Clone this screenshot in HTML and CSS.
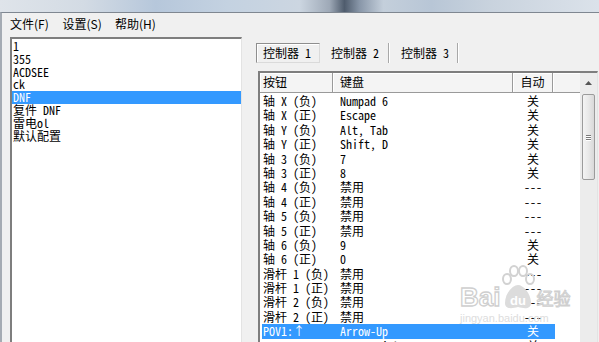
FILE: index.html
```html
<!DOCTYPE html>
<html>
<head>
<meta charset="utf-8">
<title>Controller</title>
<link rel="stylesheet" href="styles.css">
</head>
<body>
<div class="window">
  <div class="titlebar"></div>
  <div class="frame">
    <div class="menubar">
      <span class="menu">文件(F)</span>
      <span class="menu">设置(S)</span>
      <span class="menu">帮助(H)</span>
    </div>
    <div class="content">
      <div class="profiles">
        <div class="item">1</div>
        <div class="item">355</div>
        <div class="item">ACDSEE</div>
        <div class="item">ck</div>
        <div class="item sel">DNF</div>
        <div class="item">复件 DNF</div>
        <div class="item">雷电ol</div>
        <div class="item">默认配置</div>
      </div>
      <div class="right">
        <div class="tabs">
          <div class="tab tab1">控制器 1</div>
          <div class="tab tab2">控制器 2</div>
          <div class="tab tab3">控制器 3</div>
        </div>
        <div class="listview">
          <div class="lv-main">
            <div class="lv-header">
              <div class="hc h1">按钮</div>
              <div class="hc h2">键盘</div>
              <div class="hc h3">自动</div>
              <div class="hc h4"></div>
            </div>
            <div class="lv-rows">
              <div class="row"><span class="c1">轴 X (负)</span><span class="c2">Numpad 6</span><span class="c3">关</span></div>
              <div class="row"><span class="c1">轴 X (正)</span><span class="c2">Escape</span><span class="c3">关</span></div>
              <div class="row"><span class="c1">轴 Y (负)</span><span class="c2">Alt, Tab</span><span class="c3">关</span></div>
              <div class="row"><span class="c1">轴 Y (正)</span><span class="c2">Shift, D</span><span class="c3">关</span></div>
              <div class="row"><span class="c1">轴 3 (负)</span><span class="c2">7</span><span class="c3">关</span></div>
              <div class="row"><span class="c1">轴 3 (正)</span><span class="c2">8</span><span class="c3">关</span></div>
              <div class="row"><span class="c1">轴 4 (负)</span><span class="c2">禁用</span><span class="c3">---</span></div>
              <div class="row"><span class="c1">轴 4 (正)</span><span class="c2">禁用</span><span class="c3">---</span></div>
              <div class="row"><span class="c1">轴 5 (负)</span><span class="c2">禁用</span><span class="c3">---</span></div>
              <div class="row"><span class="c1">轴 5 (正)</span><span class="c2">禁用</span><span class="c3">---</span></div>
              <div class="row"><span class="c1">轴 6 (负)</span><span class="c2">9</span><span class="c3">关</span></div>
              <div class="row"><span class="c1">轴 6 (正)</span><span class="c2">0</span><span class="c3">关</span></div>
              <div class="row"><span class="c1">滑杆 1 (负)</span><span class="c2">禁用</span><span class="c3">---</span></div>
              <div class="row"><span class="c1">滑杆 1 (正)</span><span class="c2">禁用</span><span class="c3">---</span></div>
              <div class="row"><span class="c1">滑杆 2 (负)</span><span class="c2">禁用</span><span class="c3">---</span></div>
              <div class="row"><span class="c1">滑杆 2 (正)</span><span class="c2">禁用</span><span class="c3">---</span></div>
              <div class="row sel"><span class="c1">POV1:↑</span><span class="c2">Arrow-Up</span><span class="c3">关</span></div>
              <div class="row"><span class="c1">POV1:→</span><span class="c2">Arrow-Right</span><span class="c3">关</span></div>
            </div>
          </div>
          <div class="scrollbar">
            <div class="sb-up">
              <svg width="7" height="4" viewBox="0 0 7 4"><path d="M0 4 L3.5 0 L7 4 Z" fill="#555"/></svg>
            </div>
            <div class="sb-thumb">
              <div class="grip"></div>
              <div class="grip"></div>
              <div class="grip"></div>
            </div>
          </div>
        </div>
      </div>
    </div>
  </div>
  <div class="watermark">
    <div class="wm-top">
      <span class="wm-bai">Bai</span>
      <svg class="wm-paw" width="34" height="46" viewBox="0 0 34 46">
        <ellipse cx="6" cy="14" rx="4" ry="5" fill="none" stroke="#d2d2d2" stroke-width="2"/>
        <ellipse cx="13" cy="6" rx="4" ry="5" fill="none" stroke="#d2d2d2" stroke-width="2"/>
        <ellipse cx="22" cy="6" rx="4" ry="5" fill="none" stroke="#d2d2d2" stroke-width="2"/>
        <ellipse cx="29" cy="14" rx="4" ry="5" fill="none" stroke="#d2d2d2" stroke-width="2"/>
        <path d="M4 38 C4 28 12 20 17 20 C22 20 30 28 30 38 C30 44 24 44 17 42 C10 44 4 44 4 38 Z" fill="#dcdcdc"/>
        <text x="17" y="40" font-family="Liberation Sans, sans-serif" font-size="13" font-weight="bold" fill="#fff" text-anchor="middle">du</text>
      </svg>
      <span class="wm-jy">经验</span>
    </div>
    <div class="wm-url">jingyan.baidu.com</div>
  </div>
</div>
</body>
</html>
```

FILE: styles.css
```css
html, body {
  margin: 0;
  padding: 0;
}
body {
  width: 599px;
  height: 342px;
  overflow: hidden;
  background: #f0f0f0;
  font-family: "Noto Sans Mono CJK SC", "Liberation Mono", "Noto Sans CJK SC", monospace;
  font-size: 12px;
  color: #000;
}
.window {
  position: relative;
  display: flex;
  flex-direction: column;
  height: 342px;
}
.titlebar {
  height: 12px;
  flex: none;
  background: linear-gradient(90deg, #dfe4ea 0%, #d3dbe4 14%, #b6c7db 26%, #c4d2e1 38%, #ccd6e1 50%, #9ea9b7 55%, #4f5c6d 57.5%, #8896a8 60%, #c4cfdb 64%, #b8c6d6 72%, #c9d3de 82%, #dbe2ea 100%);
}
.frame {
  flex: 1;
  min-height: 0;
  display: flex;
  flex-direction: column;
  border-top: 1px solid #7f8791;
  border-left: 2px solid #a5abb3;
}
.menubar {
  height: 23px;
  flex: none;
  display: flex;
  padding-left: 8px;
  font-family: "Noto Sans CJK SC", "Liberation Sans", sans-serif;
  font-size: 12px;
  line-height: 22px;
}
.menu {
  width: 52.5px;
  white-space: nowrap;
}
.content {
  flex: 1;
  min-height: 0;
  display: flex;
}
.profiles {
  flex: none;
  width: 232px;
  box-sizing: border-box;
  margin: 1px 0 0 8px;
  border-style: solid;
  border-width: 2px 1px 0 2px;
  border-color: #7e7e7e #e3e3e3 #e3e3e3 #7e7e7e;
  background: #fff;
  padding-top: 1px;
}
.item {
  height: 12.8px;
  line-height: 12.8px;
  padding-left: 1px;
  white-space: nowrap;
}
.item.sel {
  background: #3399ff;
  color: #fff;
}
.right {
  flex: 1;
  min-width: 0;
  display: flex;
  flex-direction: column;
  padding: 7px 1px 0 14px;
}
.tabs {
  display: flex;
  height: 20px;
  flex: none;
}
.tab {
  height: 20px;
  box-sizing: border-box;
  line-height: 18px;
  white-space: nowrap;
}
.tab1 {
  width: 64px;
  padding-left: 6px;
  border: 1px solid;
  border-color: #8e8e8e #dadada #dadada #8e8e8e;
  box-shadow: inset 1px 1px #ffffff;
}
.tab2 {
  width: 69px;
  padding-left: 11px;
  padding-top: 1px;
  border-right: 1px solid #a8a8a8;
  box-shadow: 1px 0 #ffffff;
}
.tab3 {
  width: 69px;
  padding-left: 12px;
  padding-top: 1px;
  border-right: 1px solid #a8a8a8;
  box-shadow: 1px 0 #ffffff;
}
.listview {
  flex: 1;
  min-height: 0;
  display: flex;
  margin: 8px 0 0 2px;
  border-style: solid;
  border-width: 2px 1px 0 2px;
  border-color: #7e7e7e #e3e3e3 #e3e3e3 #7e7e7e;
  background: #fff;
}
.lv-main {
  flex: 1;
  min-width: 0;
}
.lv-header {
  display: flex;
  height: 20px;
  box-sizing: border-box;
  border-bottom: 1px solid #9a9a9a;
  background: #f4f4f4;
}
.hc {
  box-sizing: border-box;
  height: 19px;
  line-height: 18px;
  white-space: nowrap;
  border-right: 1px solid #9a9a9a;
  box-shadow: inset 1px 1px #ffffff;
}
.h1 { width: 73px; padding-left: 3px; }
.h2 { width: 180px; padding-left: 7px; }
.h3 { width: 40px; text-align: center; }
.h4 { flex: 1; border-right: none; }
.lv-rows {
  padding-top: 1px;
}
.row {
  display: flex;
  width: 293px;
  height: 14.4px;
  line-height: 14.4px;
  margin-left: 2px;
  white-space: nowrap;
}
.row.sel {
  background: #3399ff;
  color: #fff;
}
.c1 { width: 71px; padding-left: 1px; box-sizing: border-box; }
.c2 { width: 180px; padding-left: 7px; box-sizing: border-box; }
.c3 { width: 40px; text-align: center; }
.scrollbar {
  flex: none;
  width: 17px;
  background: #ececec;
  display: flex;
  flex-direction: column;
  align-items: center;
}
.sb-up {
  width: 17px;
  height: 19px;
  display: flex;
  align-items: center;
  justify-content: center;
}
.sb-thumb {
  margin-top: 2px;
  width: 13px;
  height: 86px;
  box-sizing: border-box;
  border: 1px solid #9b9b9b;
  border-radius: 2px;
  background: linear-gradient(90deg, #f4f4f4, #e8e8e8 50%, #d9d9d9);
  display: flex;
  flex-direction: column;
  align-items: center;
  justify-content: center;
  gap: 1px;
}
.grip {
  width: 5px;
  height: 1px;
  background: #7a7a7a;
  box-shadow: 0 1px #ffffff;
}
.watermark {
  position: absolute;
  left: 460px;
  top: 263px;
  color: #d6d6d6;
  pointer-events: none;
}
.wm-top {
  display: flex;
  align-items: flex-end;
  height: 48px;
}
.wm-bai {
  font-family: "Liberation Sans", sans-serif;
  font-size: 26px;
  font-weight: bold;
  line-height: 26px;
  color: transparent;
  -webkit-text-stroke: 1.3px #cfcfcf;
  margin-bottom: 1px;
}
.wm-paw {
  display: block;
  margin: 0 0 0 1px;
}
.wm-jy {
  font-family: "Noto Sans CJK SC", sans-serif;
  font-size: 17px;
  line-height: 22px;
  color: transparent;
  -webkit-text-stroke: 1px #cfcfcf;
  margin-left: 1px;
  margin-bottom: 2px;
}
.wm-url {
  font-family: "Liberation Sans", sans-serif;
  font-size: 11px;
  line-height: 12px;
  color: #dddddd;
  margin-top: 1px;
}
```
